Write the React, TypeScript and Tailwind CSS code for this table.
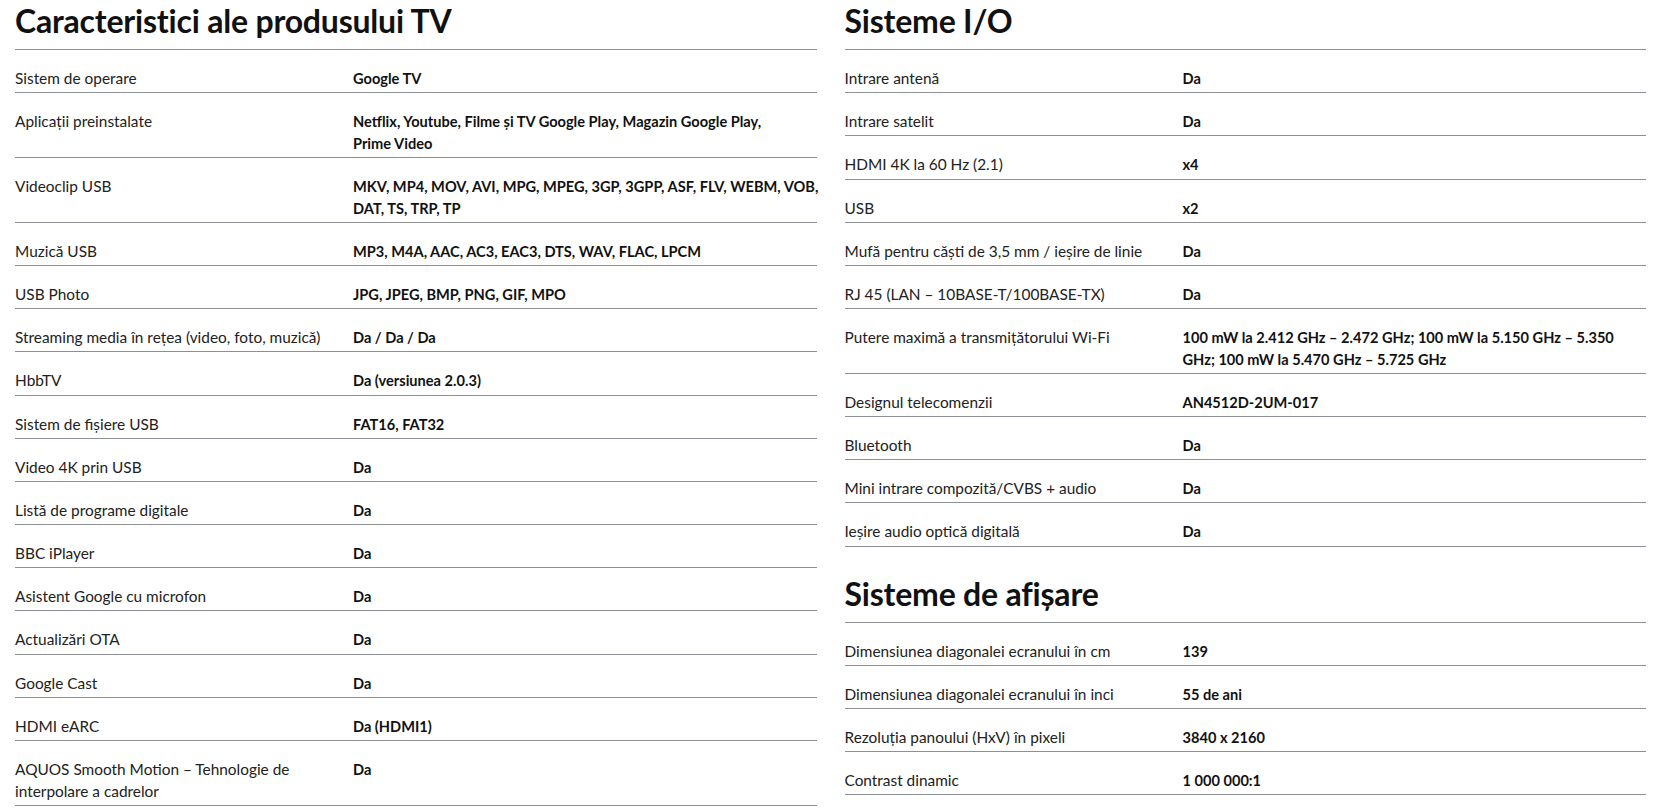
type Row = { label: string; value: string | string[] };

const tvFeatures: Row[] = [
  { label: "Sistem de operare", value: "Google TV" },
  { label: "Aplicații preinstalate", value: ["Netflix, Youtube, Filme și TV Google Play, Magazin Google Play,", "Prime Video"] },
  { label: "Videoclip USB", value: ["MKV, MP4, MOV, AVI, MPG, MPEG, 3GP, 3GPP, ASF, FLV, WEBM, VOB,", "DAT, TS, TRP, TP"] },
  { label: "Muzică USB", value: "MP3, M4A, AAC, AC3, EAC3, DTS, WAV, FLAC, LPCM" },
  { label: "USB Photo", value: "JPG, JPEG, BMP, PNG, GIF, MPO" },
  { label: "Streaming media în rețea (video, foto, muzică)", value: "Da / Da / Da" },
  { label: "HbbTV", value: "Da (versiunea 2.0.3)" },
  { label: "Sistem de fișiere USB", value: "FAT16, FAT32" },
  { label: "Video 4K prin USB", value: "Da" },
  { label: "Listă de programe digitale", value: "Da" },
  { label: "BBC iPlayer", value: "Da" },
  { label: "Asistent Google cu microfon", value: "Da" },
  { label: "Actualizări OTA", value: "Da" },
  { label: "Google Cast", value: "Da" },
  { label: "HDMI eARC", value: "Da (HDMI1)" },
  { label: "AQUOS Smooth Motion – Tehnologie de interpolare a cadrelor", value: "Da" },
];

const ioSystems: Row[] = [
  { label: "Intrare antenă", value: "Da" },
  { label: "Intrare satelit", value: "Da" },
  { label: "HDMI 4K la 60 Hz (2.1)", value: "x4" },
  { label: "USB", value: "x2" },
  { label: "Mufă pentru căști de 3,5 mm / ieșire de linie", value: "Da" },
  { label: "RJ 45 (LAN – 10BASE-T/100BASE-TX)", value: "Da" },
  {
    label: "Putere maximă a transmițătorului Wi-Fi",
    value: ["100 mW la 2.412 GHz – 2.472 GHz; 100 mW la 5.150 GHz – 5.350", "GHz; 100 mW la 5.470 GHz – 5.725 GHz"],
  },
  { label: "Designul telecomenzii", value: "AN4512D-2UM-017" },
  { label: "Bluetooth", value: "Da" },
  { label: "Mini intrare compozită/CVBS + audio", value: "Da" },
  { label: "Ieșire audio optică digitală", value: "Da" },
];

const display: Row[] = [
  { label: "Dimensiunea diagonalei ecranului în cm", value: "139" },
  { label: "Dimensiunea diagonalei ecranului în inci", value: "55 de ani" },
  { label: "Rezoluția panoului (HxV) în pixeli", value: "3840 x 2160" },
  { label: "Contrast dinamic", value: "1 000 000:1" },
];

function SpecSection({ title, rows, className = "" }: { title: string; rows: Row[]; className?: string }) {
  return (
    <section className={className}>
      <h2 className="h-[50px] border-b border-[#8c8f96] pt-[1px] text-[32px] font-bold leading-[40px] tracking-[-0.2px] text-[#111]">
        {title}
      </h2>
      {rows.map((row) => (
        <div
          key={row.label}
          className="grid grid-cols-[338px_1fr] border-b border-[#8c8f96] pt-[18px] pb-[2.6px] leading-[21.6px]"
        >
          <div className="pr-[20px] text-[15.4px] text-[#222]">{row.label}</div>
          <div className="text-[14.6px] font-bold text-[#111]">
            {Array.isArray(row.value)
              ? row.value.map((line) => (
                  <span key={line} className="block whitespace-nowrap">
                    {line}
                  </span>
                ))
              : row.value}
          </div>
        </div>
      ))}
    </section>
  );
}

export default function App() {
  return (
    <div className="min-h-screen bg-white font-['Lato',sans-serif]">
      <div className="grid grid-cols-2 gap-x-[28px] px-[15px]">
        <SpecSection title="Caracteristici ale produsului TV" rows={tvFeatures} />
        <div>
          <SpecSection title="Sisteme I/O" rows={ioSystems} />
          <SpecSection title="Sisteme de afișare" rows={display} className="mt-[26px]" />
        </div>
      </div>
    </div>
  );
}
